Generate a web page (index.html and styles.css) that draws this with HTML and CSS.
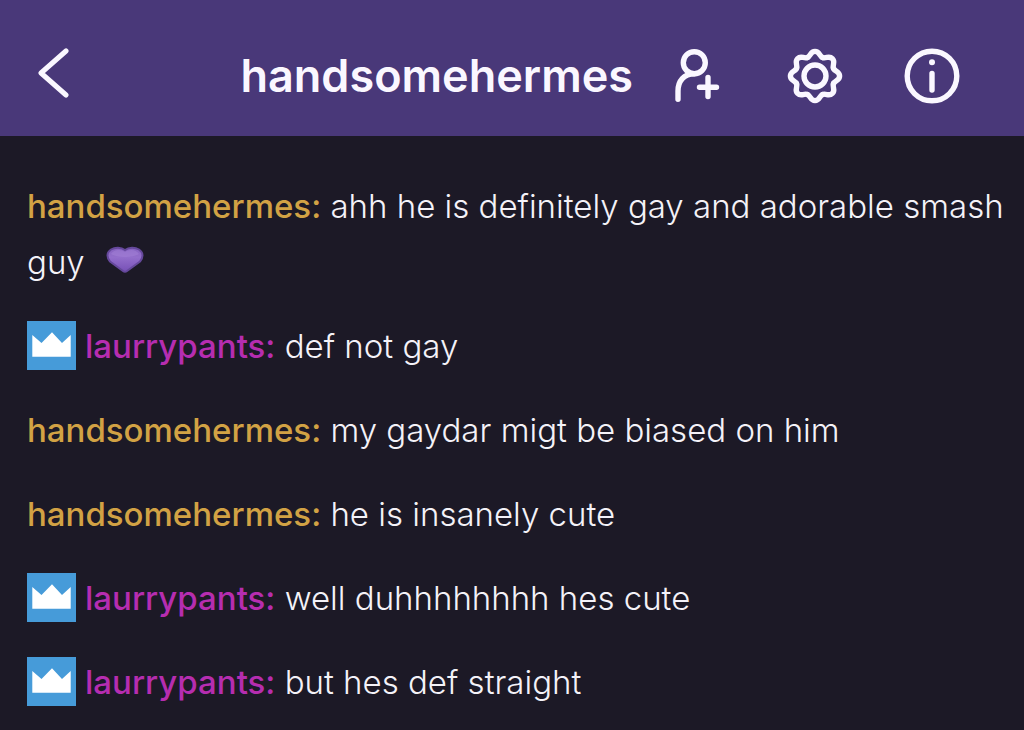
FILE: index.html
```html
<!DOCTYPE html>
<html lang="en">
<head>
<meta charset="utf-8">
<meta name="viewport" content="width=device-width, initial-scale=1">
<title>handsomehermes</title>
<link rel="stylesheet" href="styles.css">
</head>
<body>
<svg width="0" height="0" class="defs" aria-hidden="true">
  <defs>
    <path id="lobe" d="M-7.65-18.48C-4.2-19.9-4.8-24.6 0-24.6S4.2-19.9 7.65-18.48"/>
    <symbol id="crown" viewBox="0 0 49 49">
      <path fill="#fff" d="M5.3 14L14.5 22 25 11.3 35 22 43.7 14V35.7H5.3Z"/>
    </symbol>
    <linearGradient id="heart-fill" x1="0" y1="0" x2="0" y2="1">
      <stop offset="0" stop-color="#8662c0"/>
      <stop offset=".4" stop-color="#936ecb"/>
      <stop offset="1" stop-color="#7650b6"/>
    </linearGradient>
  </defs>
</svg>
<header class="bar">
  <button class="icon-button" type="button" aria-label="Back">
    <svg viewBox="0 0 56 56"><path d="M41 3L16 25 41 47" stroke-width="5"/></svg>
  </button>
  <h1 class="title">handsomehermes</h1>
  <div class="actions">
    <button class="icon-button" type="button" aria-label="Add friend">
      <svg viewBox="0 0 56 56"><circle cx="24.3" cy="14.7" r="11"/><path d="M24.3 25.7C14 25.7 8 33 8 43V51.3M38 29.5V48.5M29.5 39.3H46.5"/></svg>
    </button>
    <button class="icon-button" type="button" aria-label="Settings">
      <svg viewBox="-28 -28 56 56">
        <circle r="11"/>
        <use href="#lobe"/><use href="#lobe" transform="rotate(45)"/><use href="#lobe" transform="rotate(90)"/><use href="#lobe" transform="rotate(135)"/><use href="#lobe" transform="rotate(180)"/><use href="#lobe" transform="rotate(225)"/><use href="#lobe" transform="rotate(270)"/><use href="#lobe" transform="rotate(315)"/>
      </svg>
    </button>
    <button class="icon-button" type="button" aria-label="Info">
      <svg viewBox="0 0 56 56"><circle cx="28" cy="28" r="24.8"/><path d="M28 25.5V42"/><circle class="dot" cx="28" cy="14.3" r="3"/></svg>
    </button>
  </div>
</header>
<main class="chat">
  <p class="message"><span class="name gold">handsomehermes:</span> ahh he is definitely gay and adorable smash guy <svg class="heart" viewBox="0 0 38 28" role="img" aria-label="purple heart"><path fill="url(#heart-fill)" stroke="#65489b" stroke-width="2" d="M19 4C15 1 9 1 5 3.5 0 7 1 12 4 15.500L17 25Q19 26.500 21 25L34 15.500C37 12 38 7 33 3.500 29 1 23 1 19 4Z"/><path fill="#a98adb" opacity=".4" d="M5 8C8 3 15 3 19 6 23 3 30 3 33 8 26 12 12 12 5 8Z"/></svg></p>
  <p class="message"><svg class="badge" role="img" aria-label="Prime"><use href="#crown"/></svg><span class="name pink">laurrypants:</span> def not gay</p>
  <p class="message"><span class="name gold">handsomehermes:</span> my gaydar migt be biased on him</p>
  <p class="message"><span class="name gold">handsomehermes:</span> he is insanely cute</p>
  <p class="message"><svg class="badge" role="img" aria-label="Prime"><use href="#crown"/></svg><span class="name pink">laurrypants:</span> well duhhhhhhhh hes cute</p>
  <p class="message"><svg class="badge" role="img" aria-label="Prime"><use href="#crown"/></svg><span class="name pink">laurrypants:</span> but hes def straight</p>
</main>
</body>
</html>
```
FILE: styles.css
```css
* { box-sizing: border-box; }

body {
  margin: 0;
  background: #1c1926;
  color: #f4f2f8;
  font-family: Inter, "Liberation Sans", sans-serif;
}

.defs { position: absolute; }

.bar {
  display: flex;
  align-items: center;
  padding: 48px 64px 32px 25px;
  background: #493879;
}

.title {
  flex: 1;
  margin: 0 37px 0 0;
  text-align: right;
  font-size: 45px;
  line-height: 56px;
  font-weight: 600;
  color: #faf7ff;
}

.actions { display: flex; gap: 61px; }

.icon-button {
  width: 56px;
  height: 56px;
  padding: 0;
  border: 0;
  background: none;
  color: #faf7ff;
}

.icon-button svg {
  display: block;
  width: 100%;
  height: 100%;
  fill: none;
  stroke: currentColor;
  stroke-width: 5.4;
  stroke-linecap: round;
  stroke-linejoin: round;
}

.icon-button .dot { fill: currentColor; stroke: none; }

.chat {
  display: flex;
  flex-direction: column;
  gap: 28px;
  padding: 42px 16px 16px 27px;
}

.message {
  margin: 0;
  font-size: 33px;
  line-height: 56px;
  font-weight: 300;
}

.name { font-weight: 500; }
.gold { color: #d2a244; }
.pink { color: #b62db0; }

.badge {
  display: inline-block;
  width: 49px;
  height: 49px;
  margin-right: 9px;
  vertical-align: top;
  margin-top: 3px;
  background: #469bd9;
}

.heart {
  width: 38px;
  height: 28px;
  margin-left: 12px;
}
```
